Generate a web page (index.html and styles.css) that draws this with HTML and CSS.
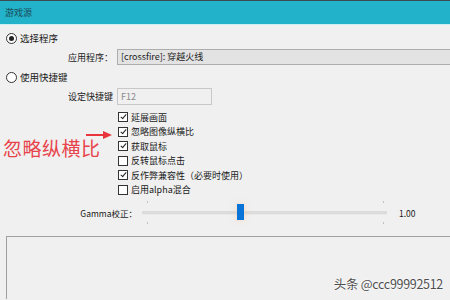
FILE: index.html
```html
<!DOCTYPE html>
<html lang="zh-CN">
<head>
    <meta charset="UTF-8">
    <title>游戏源</title>
    <link rel="stylesheet" href="styles.css">
</head>
<body>
    <div class="titlebar">游戏源</div>

    <div class="content">
        <div class="radio-row">
            <span class="radio checked"></span>
            <span>选择程序</span>
        </div>
        <div class="field-row app-row">
            <span class="field-label">应用程序：</span>
            <div class="combo">[crossfire]: 穿越火线</div>
        </div>
        <div class="radio-row second">
            <span class="radio"></span>
            <span>使用快捷键</span>
        </div>
        <div class="field-row hotkey-row">
            <span class="field-label">设定快捷键</span>
            <div class="hotkey">F12</div>
        </div>

        <div class="check-list">
            <div class="check-row"><span class="check on"></span>延展画面</div>
            <div class="check-row"><span class="check on"></span>忽略图像纵横比</div>
            <div class="check-row"><span class="check on"></span>获取鼠标</div>
            <div class="check-row"><span class="check"></span>反转鼠标点击</div>
            <div class="check-row"><span class="check on"></span>反作弊兼容性（必要时使用）</div>
            <div class="check-row"><span class="check"></span>启用alpha混合</div>
        </div>

        <div class="gamma-row">
            <span class="gamma-label">Gamma校正：</span>
            <div class="slider">
                <span class="tick tick-left top"></span>
                <span class="tick tick-left bottom"></span>
                <span class="tick tick-right top"></span>
                <span class="tick tick-right bottom"></span>
                <span class="thumb"></span>
            </div>
            <span class="gamma-value">1.00</span>
        </div>

        <div class="preview">
            <span class="watermark">头条 @ccc99992512</span>
        </div>

        <!-- annotation drawn over the dialog -->
        <div class="note">忽略纵横比</div>
        <svg class="note-arrow" width="26" height="8" viewBox="0 0 26 8">
            <line x1="0" y1="4" x2="19" y2="4" stroke="#e8343c" stroke-width="2"/>
            <polygon points="17,0 26,4 17,8" fill="#e8343c"/>
        </svg>
    </div>
</body>
</html>
```

FILE: styles.css
```css
/* General */
body {
    margin: 0;
    padding: 0;
    width: 450px;
    height: 300px;
    overflow: hidden;
    background-color: #f0f0f0;
    font-family: "Noto Sans CJK SC", "Noto Sans", sans-serif;
    font-size: 9px;
    color: #1a1a1a;
}

/* Title bar */
.titlebar {
    height: 23px;
    line-height: 23px;
    padding-left: 5px;
    background-color: #22b2c9;
    border-top: 1px solid #3d4a52;
    border-bottom: 1px solid #c9eef4;
    color: #1c4b58;
    font-size: 9px;
}

.content {
    position: relative;
    padding-left: 6px;
}

/* Radio rows */
.radio-row {
    display: flex;
    align-items: center;
    height: 16px;
    margin-top: 5px;
    gap: 3px;
    font-size: 9.5px;
}

.radio-row.second {
    margin-top: 4px;
}

.radio {
    width: 9px;
    height: 9px;
    border: 1px solid #333;
    border-radius: 50%;
    background-color: #fff;
    position: relative;
}

.radio.checked::after {
    content: "";
    position: absolute;
    left: 2px;
    top: 2px;
    width: 5px;
    height: 5px;
    border-radius: 50%;
    background-color: #222;
}

/* Labelled fields */
.field-row {
    display: flex;
    align-items: center;
    margin-top: 3px;
}

.field-label {
    width: 49px;
    margin-left: 62px;
    white-space: nowrap;
}

.combo {
    height: 14px;
    line-height: 14px;
    flex: 1;
    margin-right: -10px;
    padding-left: 3px;
    background-color: #e3e3e3;
    border: 1px solid #adadad;
    color: #222;
}

.hotkey {
    width: 90px;
    height: 15px;
    line-height: 15px;
    padding-left: 3px;
    background-color: #f0f0f0;
    border: 1px solid #c8c8c8;
    color: #8a8a8a;
}

/* Checkboxes */
.check-list {
    margin-top: 5px;
    padding-left: 112px;
}

.check-row {
    display: flex;
    align-items: center;
    height: 14.5px;
    gap: 3px;
    font-size: 9px;
}

.check {
    width: 8px;
    height: 8px;
    border: 1px solid #333;
    background-color: #fff;
    position: relative;
}

.check.on::after {
    content: "";
    position: absolute;
    left: 2.5px;
    top: 0px;
    width: 2px;
    height: 5px;
    border-right: 1px solid #222;
    border-bottom: 1px solid #222;
    transform: rotate(40deg);
}

/* Gamma slider */
.gamma-row {
    display: flex;
    align-items: center;
    height: 24px;
    margin-top: 4px;
}

.gamma-label {
    width: 131px;
    text-align: right;
    font-size: 8.5px;
    white-space: nowrap;
}

.slider {
    position: relative;
    width: 245px;
    height: 3px;
    margin-left: 5px;
    background-color: #dcdcdc;
    border-bottom: 1px solid #e8e8e8;
}

.tick {
    position: absolute;
    width: 1px;
    height: 2px;
    background-color: #c4c4c4;
}

.tick-left { left: 5px; }
.tick-right { left: 241px; }
.tick.top { top: -10px; }
.tick.bottom { top: 11px; }

.thumb {
    position: absolute;
    left: 95px;
    top: -7px;
    width: 7px;
    height: 16px;
    background-color: #0a74d8;
    box-shadow: 0 0 6px rgba(255, 200, 150, 0.6);
}

.gamma-value {
    margin-left: 12px;
    font-size: 8.5px;
}

/* Preview box */
.preview {
    margin-top: 11px;
    margin-right: -10px;
    height: 62px;
    border-top: 1px solid #a0a0a0;
    border-left: 1px solid #a0a0a0;
    position: relative;
}

.watermark {
    position: absolute;
    right: 17px;
    top: 37px;
    font-size: 12.5px;
    color: #4e4e4e;
    text-shadow: 0 0 2px #fff, 0 0 2px #fff;
    letter-spacing: -0.3px;
}

/* Red annotation */
.note {
    position: absolute;
    left: 3px;
    top: 104px;
    font-size: 19px;
    color: #e8434a;
    letter-spacing: 0.5px;
}

.note-arrow {
    position: absolute;
    left: 86px;
    top: 101px;
}
```
